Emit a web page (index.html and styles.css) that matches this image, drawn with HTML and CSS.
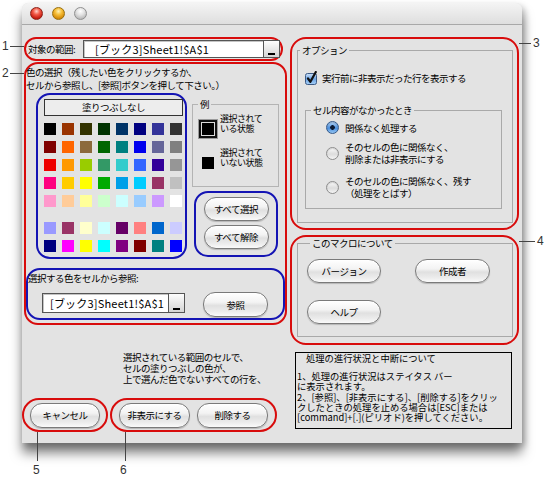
FILE: index.html
```html
<!DOCTYPE html>
<html lang="ja">
<head>
<meta charset="utf-8">
<title>色で行を非表示/削除</title>
<link rel="stylesheet" href="styles.css">
</head>
<body>
<div class="stage">
  <div class="window">
    <div class="titlebar">
      <span class="light l-red"></span><span class="light l-yellow"></span><span class="light l-gray"></span>
    </div>
    <div class="content">
      <div class="col-left">
        <div class="range ring-red">
          <span class="range-label">対象の範囲:</span>
          <div class="refbox refbox-wide"><span class="reftext">[ブック3]Sheet1!$A$1</span><span class="refbtn"></span></div>
        </div>
        <div class="colorsec ring-red">
          <p class="intro">色の選択（残したい色をクリックするか、<br>セルから参照し、[参照]ボタンを押して下さい。）</p>
          <div class="colorrow">
            <div class="palette ring-blue">
              <div class="nofill">塗りつぶしなし</div>
              <div class="swatches">
                <span class="sw" style="background:#000000"></span><span class="sw" style="background:#993300"></span><span class="sw" style="background:#333300"></span><span class="sw" style="background:#003300"></span><span class="sw" style="background:#003366"></span><span class="sw" style="background:#000080"></span><span class="sw" style="background:#333399"></span><span class="sw" style="background:#333333"></span>
                <span class="sw" style="background:#800000"></span><span class="sw" style="background:#ff6600"></span><span class="sw" style="background:#8c6a3c"></span><span class="sw" style="background:#006600"></span><span class="sw" style="background:#008080"></span><span class="sw" style="background:#0000ee"></span><span class="sw" style="background:#666699"></span><span class="sw" style="background:#808080"></span>
                <span class="sw" style="background:#ee0000"></span><span class="sw" style="background:#ff9900"></span><span class="sw" style="background:#99cc00"></span><span class="sw" style="background:#339966"></span><span class="sw" style="background:#33cccc"></span><span class="sw" style="background:#3366ff"></span><span class="sw" style="background:#330099"></span><span class="sw" style="background:#969696"></span>
                <span class="sw" style="background:#ff0080"></span><span class="sw" style="background:#ffcc00"></span><span class="sw" style="background:#ffff00"></span><span class="sw" style="background:#00aa00"></span><span class="sw" style="background:#00a0e8"></span><span class="sw" style="background:#00ccff"></span><span class="sw" style="background:#993366"></span><span class="sw" style="background:#c0c0c0"></span>
                <span class="sw" style="background:#ff99cc"></span><span class="sw" style="background:#ffcc99"></span><span class="sw" style="background:#ffff99"></span><span class="sw" style="background:#ccffcc"></span><span class="sw" style="background:#ccffff"></span><span class="sw" style="background:#99ccff"></span><span class="sw" style="background:#cc99ff"></span><span class="sw" style="background:#ffffff"></span>
              </div>
              <div class="swatches swatches-extra">
                <span class="sw" style="background:#9999ff"></span><span class="sw" style="background:#993366"></span><span class="sw" style="background:#ffffcc"></span><span class="sw" style="background:#ccffff"></span><span class="sw" style="background:#660066"></span><span class="sw" style="background:#ff8080"></span><span class="sw" style="background:#0066cc"></span><span class="sw" style="background:#ccccff"></span>
                <span class="sw" style="background:#000080"></span><span class="sw" style="background:#ff00ff"></span><span class="sw" style="background:#ffff00"></span><span class="sw" style="background:#00ffff"></span><span class="sw" style="background:#800080"></span><span class="sw" style="background:#800000"></span><span class="sw" style="background:#008080"></span><span class="sw" style="background:#0000ff"></span>
              </div>
            </div>
            <div class="side">
              <fieldset class="example">
                <legend>例</legend>
                <div class="ex-row ex-sel"><span class="ex-sq-sel"><span class="ex-core"></span></span><span class="ex-text">選択されて<br>いる状態</span></div>
                <div class="ex-row ex-unsel"><span class="ex-sq"></span><span class="ex-text ex-text2">選択されて<br>いない状態</span></div>
              </fieldset>
              <div class="allbtns ring-blue">
                <button class="aqua btn-all">すべて選択</button>
                <button class="aqua btn-all">すべて解除</button>
              </div>
            </div>
          </div>
          <div class="cellref ring-blue">
            <div class="cellref-label">選択する色をセルから参照:</div>
            <div class="cellref-row">
              <div class="refbox refbox-small"><span class="reftext reftext-small">[ブック3]Sheet1!$A$1</span><span class="refbtn"></span></div>
              <button class="aqua btn-ref">参照</button>
            </div>
          </div>
        </div>
      </div>
      <div class="col-right">
        <div class="options ring-red">
          <fieldset class="group group-options">
            <legend>オプション</legend>
            <div class="check-row">
              <svg class="checkbox" width="14" height="14" viewBox="0 0 14 14">
                <defs><linearGradient id="cbg" x1="0" y1="0" x2="0" y2="1"><stop offset="0" stop-color="#cfe2f8"/><stop offset="0.5" stop-color="#6ea6e6"/><stop offset="1" stop-color="#a6cff6"/></linearGradient></defs>
                <rect x="1.5" y="2.5" width="11" height="11" rx="2" fill="url(#cbg)" stroke="#3c5a85"/>
                <path d="M4 7.5 L6.4 10.8 L11.8 1" fill="none" stroke="#111" stroke-width="2.2" stroke-linecap="round" stroke-linejoin="round"/>
              </svg>
              <span>実行前に非表示だった行を表示する</span>
            </div>
            <fieldset class="group group-empty">
              <legend>セル内容がなかったとき</legend>
              <div class="radio-row r1"><span class="radio radio-on"></span><span class="radio-text">関係なく処理する</span></div>
              <div class="radio-row r2"><span class="radio"></span><span class="radio-text">そのセルの色に関係なく、<br>削除または非表示にする</span></div>
              <div class="radio-row r3"><span class="radio"></span><span class="radio-text">そのセルの色に関係なく、残す<br>（処理をとばす）</span></div>
            </fieldset>
          </fieldset>
        </div>
        <div class="about ring-red">
          <fieldset class="group group-about">
            <legend>このマクロについて</legend>
            <div class="about-grid">
              <button class="aqua btn-about">バージョン</button>
              <button class="aqua btn-about">作成者</button>
              <button class="aqua btn-about">ヘルプ</button>
            </div>
          </fieldset>
        </div>
      </div>
    </div>
    <div class="bottom">
      <div class="bottom-left">
        <p class="summary">選択されている範囲のセルで、<br>セルの塗りつぶしの色が、<br>上で選んだ色でないすべての行を、</p>
        <div class="actions">
          <div class="ring-red act-cancel"><button class="aqua btn-act btn-cancel">キャンセル</button></div>
          <div class="ring-red act-main"><button class="aqua btn-act">非表示にする</button><button class="aqua btn-act">削除する</button></div>
        </div>
      </div>
      <div class="notice">
        <div class="notice-title">処理の進行状況と中断について</div>
        <div class="notice-body">1、処理の進行状況はステイタス バー<br>に表示されます。<br>2、[参照]、[非表示にする]、[削除する]をクリッ<br>クしたときの処理を止める場合は[ESC]または<br>[command]+[.](ピリオド)を押してください。</div>
      </div>
    </div>
  </div>

  <span class="callout-num n1">1</span><span class="lead-h h1"></span>
  <span class="callout-num n2">2</span><span class="lead-h h2"></span>
  <span class="callout-num n3">3</span><span class="lead-h h3"></span>
  <span class="callout-num n4">4</span><span class="lead-h h4"></span>
  <span class="callout-num n5">5</span><span class="lead-v v5"></span>
  <span class="callout-num n6">6</span><span class="lead-v v6"></span>
</div>
</body>
</html>
```
FILE: styles.css
```css
* { box-sizing: border-box; }
html, body { margin: 0; padding: 0; background: #fff; }
body {
  width: 550px; height: 482px; overflow: hidden;
  font-family: "Noto Sans CJK JP", "Noto Sans", sans-serif;
  font-size: 9.5px; letter-spacing: -0.5px; color: #000;
}
.stage { position: relative; width: 550px; height: 482px; padding: 3px 0 0 22px; }

.window {
  width: 500px; height: 440px; background: #e3e3e3;
  border-radius: 6px 6px 0 0;
  box-shadow: 0 10px 12px rgba(0,0,0,0.5), 3px 3px 6px rgba(0,0,0,0.2);
  display: flex; flex-direction: column;
}
.titlebar {
  height: 22px; flex: none; display: flex; align-items: center; gap: 9px; padding-left: 8px;
  background: linear-gradient(#f4f4f4, #dedede);
  border-bottom: 1px solid #a8a8a8; border-radius: 6px 6px 0 0;
}
.light { width: 13px; height: 13px; border-radius: 50%; flex: none; }
.l-red { background: radial-gradient(circle at 50% 30%, #ffd0c8 0, #f25a48 35%, #c41a0e 75%, #9a120a 100%); border: 1px solid #8c2218; }
.l-yellow { background: radial-gradient(circle at 50% 30%, #fff2b8 0, #f7c03a 35%, #d58a08 75%, #b06c04 100%); border: 1px solid #98700e; }
.l-gray { background: radial-gradient(circle at 50% 30%, #ffffff 0, #e2e2e2 40%, #b8b8b8 80%, #a0a0a0 100%); border: 1px solid #909090; }

.content {
  height: 320px; flex: none; display: grid;
  grid-template-columns: 263px 229px; column-gap: 3px;
  padding: 12px 0 0 2px;
}
.ring-red { border: 2px solid #d80c0c; }
.ring-blue { border: 2px solid #1414b4; }

/* range row */
.range { width: 259px; height: 24px; border-radius: 12px; display: flex; align-items: center; padding: 0 1px; margin-bottom: 1px; }
.range-label { width: 56px; flex: none; padding-left: 1px; white-space: nowrap; }
.refbox { display: flex; background: #fff; border: 1px solid #555; box-shadow: inset 1px 1px 0 #c4c4c4; flex: none; }
.refbox-wide { width: 197px; height: 18px; }
.refbox-small { width: 143px; height: 20px; margin: 1px 0 0 14px; }
.reftext { flex: 1; padding-left: 11px; font-size: 11px; line-height: 16px; letter-spacing: 0.2px; white-space: nowrap; overflow: hidden; }
.reftext-small { padding-left: 7px; line-height: 18px; }
.refbtn { width: 16px; flex: none; border-left: 1px solid #555; background: linear-gradient(#fdfdfd, #d4d4d4); display: flex; align-items: flex-end; justify-content: center; padding-bottom: 2px; }
.refbtn::after { content: ""; width: 7px; height: 2px; background: #000; }

/* color section */
.colorsec { width: 263px; height: 263px; border-radius: 14px; padding-top: 2px; }
.intro { margin: 0; line-height: 13px; white-space: nowrap; }
.colorrow { display: flex; margin-top: 1px; padding-left: 10px; }
.palette { width: 151px; height: 166px; border-radius: 14px; padding: 2px 0 0 6px; flex: none; }
.nofill { width: 139px; height: 17px; border: 1px solid #333; background: #ededed; text-align: center; line-height: 15px; margin-top: 2px; }
.swatches { display: grid; grid-template-columns: repeat(8, 12px); grid-auto-rows: 12px; gap: 6px; margin-top: 7px; }
.swatches-extra { margin-top: 15px; }
.sw { display: block; width: 12px; height: 12px; }

.side { margin-left: 5px; width: 87px; flex: none; display: flex; flex-direction: column; }
.example { margin: 6px 0 0 0; padding: 0 0 17px 0; border: 1px solid #b4b4b4; width: 87px; min-inline-size: auto; }
.example > legend { padding: 0 2px; margin-left: 5px; line-height: 10px; }
.ex-row { display: flex; align-items: flex-start; }
.ex-sel { margin-top: 5px; }
.ex-sq-sel { margin: 6px 0 0 6px; width: 18px; height: 18px; border: 2px solid #111; padding: 1px; background: #dcdcdc; flex: none; outline: 1px solid #9a9a9a; }
.ex-core { display: block; width: 12px; height: 12px; background: #000; }
.ex-text { font-size: 9px; line-height: 10px; margin-left: 3px; white-space: nowrap; }
.ex-unsel { margin-top: 10px; }
.ex-sq { margin: 9px 0 0 9px; width: 12px; height: 12px; background: #000; flex: none; }
.ex-text2 { margin-left: 6px; }

.allbtns { margin: 4px 0 0 2px; width: 84px; height: 66px; border-radius: 14px; display: flex; flex-direction: column; align-items: center; gap: 4px; padding-top: 4px; }

.aqua {
  font-family: inherit; font-size: 9.5px; letter-spacing: -0.5px; color: #000;
  border: 1px solid #7a7a7a; border-radius: 12px; padding: 0;
  background: linear-gradient(#ffffff 0%, #f3f3f3 40%, #e0e0e0 55%, #ececec 80%, #fafafa 100%);
  box-shadow: inset 0 1px 1px rgba(255,255,255,0.9), 0 1px 1px rgba(0,0,0,0.2);
  flex: none;
}
.btn-all { width: 65px; height: 24px; }
.btn-ref { width: 65px; height: 25px; margin-left: 18px; }

.cellref { width: 259px; height: 52px; border-radius: 14px; margin-top: 9px; }
.cellref-label { line-height: 12px; padding-top: 2px; white-space: nowrap; }
.cellref-row { display: flex; align-items: flex-start; margin-top: 8px; }

/* right column */
.options { height: 193px; border-radius: 16px; padding: 5px 4px 0 5px; }
.group { margin: 0; padding: 0; border: 1px solid #a9a9a9; min-inline-size: auto; }
.group > legend { line-height: 12px; padding: 0 2px; white-space: nowrap; }
.group-options { padding: 0 0 13px 0; }
.group-options > legend { margin-left: 2px; }
.check-row { display: flex; align-items: center; margin-top: 15px; padding-left: 6px; height: 14px; white-space: nowrap; }
.checkbox { flex: none; margin-right: 4px; }
.group-empty { margin: 19px 0 0 7px; width: 197px; padding: 0 0 9px 0; }
.group-empty > legend { margin-left: 5px; }
.radio-row { display: flex; align-items: center; padding-left: 20px; }
.radio { width: 13px; height: 13px; border-radius: 50%; margin-right: 6px; flex: none; border: 1px solid #8d8d8d; background: linear-gradient(#fbfbfb, #dcdcdc 55%, #f4f4f4); box-shadow: inset 0 1px 1px rgba(0,0,0,0.15); }
.radio-on { border-color: #34598a; background: radial-gradient(circle, #0b1a33 0, #0b1a33 2px, rgba(0,0,0,0) 2.6px), linear-gradient(#b6d6f8, #4a8edc 55%, #93c5f3); }
.radio-text { line-height: 12px; white-space: nowrap; }
.r1 { margin-top: 5px; }
.r2 { margin-top: 7px; }
.r3 { margin-top: 10px; }

.about { margin-top: 5px; height: 110px; border-radius: 16px; padding: 0 4px 0 5px; }
.group-about { padding: 10px 0 12px 9px; }
.group-about > legend { margin-left: 3px; }
.about-grid { display: grid; grid-template-columns: 74px 75px; column-gap: 34px; row-gap: 17px; }
.btn-about { width: 100%; height: 24px; }

/* bottom */
.bottom { height: 98px; flex: none; display: grid; grid-template-columns: 268px 217px; column-gap: 5px; padding-top: 7px; }
.summary { margin: 0 0 0 101px; line-height: 11px; white-space: nowrap; }
.actions { display: flex; margin-top: 13px; }
.act-cancel { width: 86px; height: 34px; border-radius: 17px; display: flex; align-items: center; padding-left: 6px; }
.act-main { width: 167px; height: 34px; border-radius: 17px; margin-left: 2px; display: flex; align-items: center; gap: 7px; padding-left: 7px; }
.btn-act { width: 71px; height: 25px; }
.btn-cancel { width: 70px; }
.notice { height: 77px; border: 1px solid #000; padding-left: 1px; white-space: nowrap; font-size: 9.3px; letter-spacing: 0; }
.notice-title { padding-left: 9px; line-height: 10px; margin-bottom: 8px; }
.notice-body { line-height: 10.25px; }

/* annotations */
.callout-num { position: absolute; font-family: "Liberation Sans", Arial, sans-serif; font-size: 12px; line-height: 12px; letter-spacing: 0; color: #333; }
.lead-h { position: absolute; height: 1px; background: #444; }
.lead-v { position: absolute; width: 1px; background: #444; }
.n1 { left: 2px; top: 40px; }
.h1 { left: 10px; top: 46px; width: 14px; }
.n2 { left: 2px; top: 67px; }
.h2 { left: 10px; top: 73px; width: 14px; }
.n3 { left: 533px; top: 37px; }
.h3 { left: 519px; top: 43px; width: 12px; }
.n4 { left: 537px; top: 235px; }
.h4 { left: 519px; top: 241px; width: 16px; }
.n5 { left: 33px; top: 464px; }
.v5 { left: 37px; top: 432px; height: 29px; }
.n6 { left: 120px; top: 464px; }
.v6 { left: 125px; top: 432px; height: 29px; }
```
